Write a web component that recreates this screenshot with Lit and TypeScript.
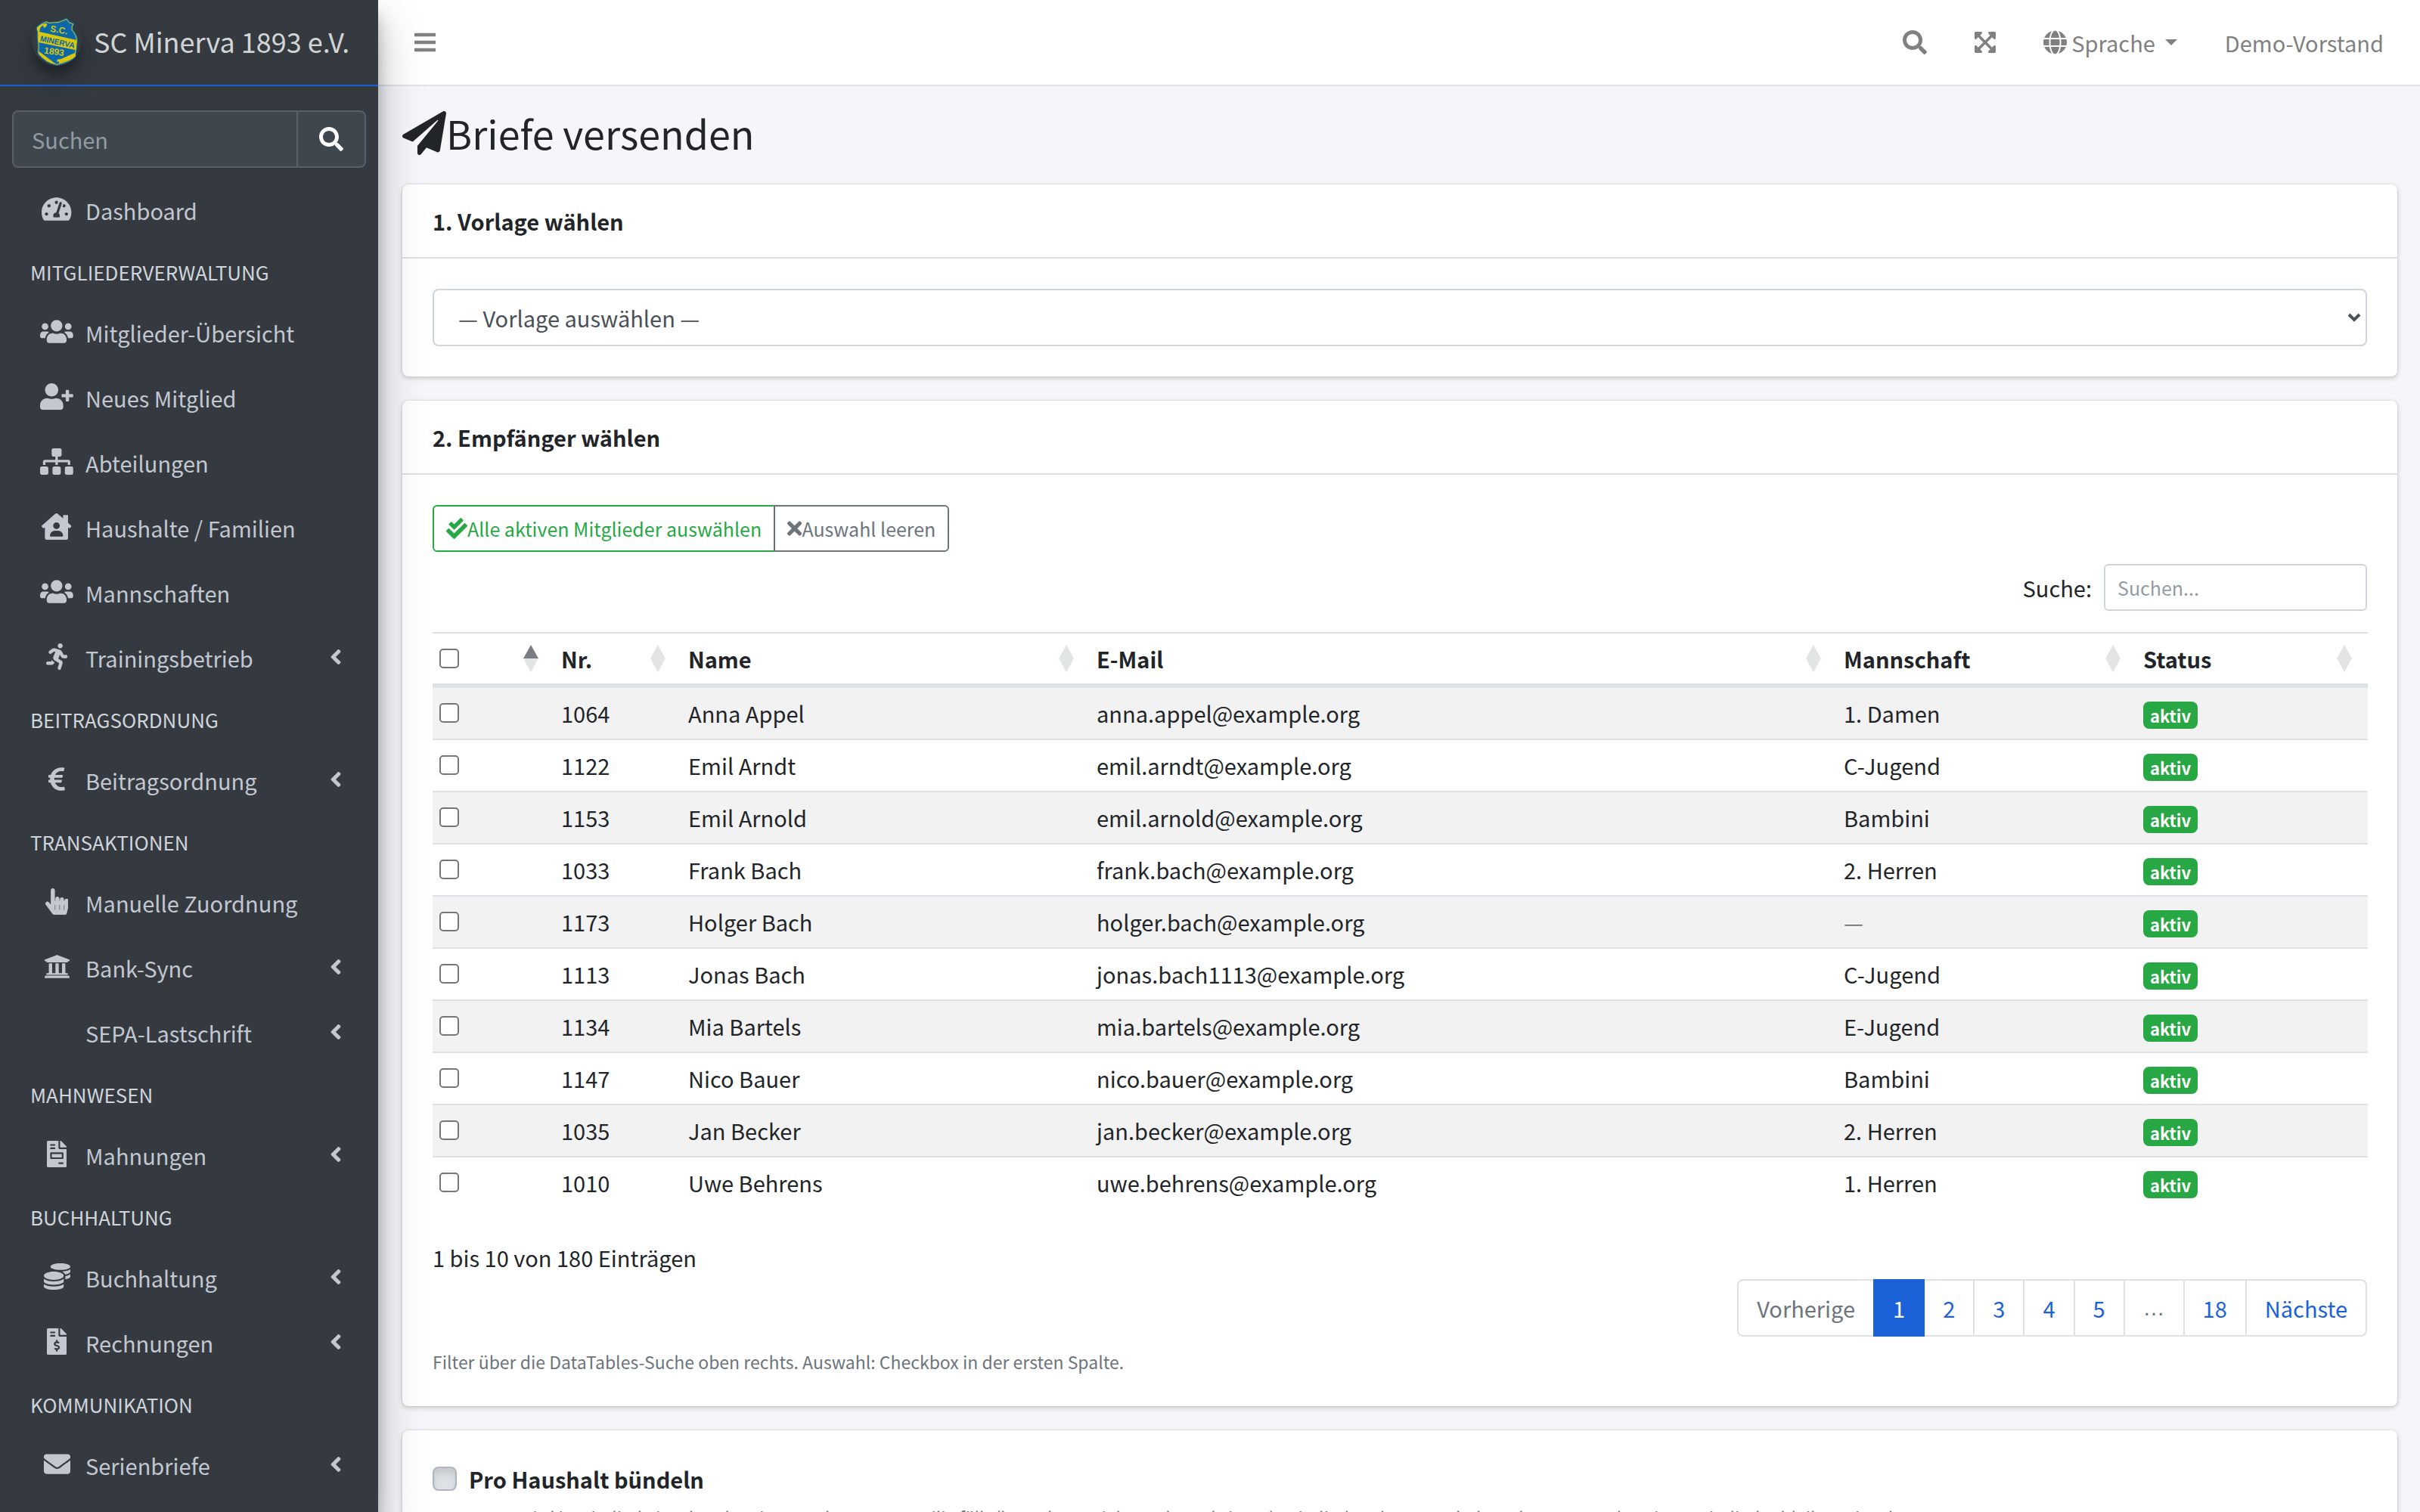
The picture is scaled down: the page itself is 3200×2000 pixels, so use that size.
import { LitElement, html, css, nothing } from 'lit';
import { customElement, property, state } from 'lit/decorators.js';
import { classMap } from 'lit/directives/class-map.js';

// name: [viewBox width, path], every icon is 512 units high
const icons: Record<string, [number, string]> = {
  gauge: [576, 'M288 32C128.94 32 0 160.94 0 320c0 52.8 14.25 102.26 39.06 144.8 5.61 9.62 16.3 15.2 27.44 15.2h443c11.14 0 21.83-5.58 27.44-15.2C561.75 422.26 576 372.8 576 320c0-159.06-128.94-288-288-288zm0 64c14.71 0 26.58 10.13 30.32 23.65-1.11 2.26-2.64 4.23-3.45 6.67l-9.22 27.67c-5.13 3.49-10.97 6.01-17.64 6.01-17.67 0-32-14.33-32-32S270.33 96 288 96zM96 384c-17.67 0-32-14.33-32-32s14.33-32 32-32 32 14.33 32 32-14.33 32-32 32zm48-160c-17.67 0-32-14.33-32-32s14.33-32 32-32 32 14.33 32 32-14.33 32-32 32zm246.77-72.41l-61.33 184C343.13 347.33 352 364.54 352 384c0 11.72-3.38 22.55-8.88 32H232.88c-5.5-9.45-8.88-20.28-8.88-32 0-33.94 26.5-61.43 59.9-63.59l61.34-184.01c4.17-12.56 17.73-19.45 30.36-15.17 12.57 4.19 19.35 17.79 15.17 30.36zm14.66 57.2l15.52-46.55c3.47-1.29 7.13-2.23 11.05-2.23 17.67 0 32 14.33 32 32s-14.33 32-32 32c-11.38-.01-20.89-6.28-26.57-15.22zM480 384c-17.67 0-32-14.33-32-32s14.33-32 32-32 32 14.33 32 32-14.33 32-32 32z'],
  users: [640, 'M96 224c35.3 0 64-28.7 64-64s-28.7-64-64-64-64 28.7-64 64 28.7 64 64 64zm448 0c35.3 0 64-28.7 64-64s-28.7-64-64-64-64 28.7-64 64 28.7 64 64 64zm32 32h-64c-17.6 0-33.5 7.1-45.1 18.6 40.3 22.1 68.9 62 75.1 109.4h66c17.7 0 32-14.3 32-32v-32c0-35.3-28.7-64-64-64zm-256 0c61.9 0 112-50.1 112-112S381.9 32 320 32 208 82.1 208 144s50.1 112 112 112zm76.8 32h-8.3c-20.8 10-43.9 16-68.5 16s-47.6-6-68.5-16h-8.3C179.6 288 128 339.6 128 403.2V432c0 26.5 21.5 48 48 48h288c26.5 0 48-21.5 48-48v-28.8c0-63.6-51.6-115.2-115.2-115.2zm-223.7-13.4C161.5 263.1 145.6 256 128 256H64c-35.3 0-64 28.7-64 64v32c0 17.7 14.3 32 32 32h65.9c6.3-47.4 34.9-87.3 75.2-109.4z'],
  userPlus: [640, 'M624 208h-64v-64c0-8.8-7.2-16-16-16h-32c-8.8 0-16 7.2-16 16v64h-64c-8.8 0-16 7.2-16 16v32c0 8.8 7.2 16 16 16h64v64c0 8.8 7.2 16 16 16h32c8.8 0 16-7.2 16-16v-64h64c8.8 0 16-7.2 16-16v-32c0-8.8-7.2-16-16-16zm-400 48c70.7 0 128-57.3 128-128S294.7 0 224 0 96 57.3 96 128s57.3 128 128 128zm89.6 32h-16.7c-22.2 10.2-46.9 16-72.9 16s-50.6-5.8-72.9-16h-16.7C60.2 288 0 348.2 0 422.4V464c0 26.5 21.5 48 48 48h352c26.5 0 48-21.5 48-48v-41.6c0-74.2-60.2-134.4-134.4-134.4z'],
  sitemap: [640, 'M128 352H32c-17.67 0-32 14.33-32 32v96c0 17.67 14.33 32 32 32h96c17.67 0 32-14.33 32-32v-96c0-17.67-14.33-32-32-32zm-24-80h192v48h48v-48h192v48h48v-57.59c0-21.17-17.23-38.41-38.41-38.41H344v-64h40c17.67 0 32-14.33 32-32V32c0-17.67-14.33-32-32-32H256c-17.67 0-32 14.33-32 32v96c0 17.67 14.33 32 32 32h40v64H94.41C73.23 224 56 241.23 56 262.41V320h48v-48zm264 80h-96c-17.67 0-32 14.33-32 32v96c0 17.67 14.33 32 32 32h96c17.67 0 32-14.33 32-32v-96c0-17.67-14.33-32-32-32zm240 0h-96c-17.67 0-32 14.33-32 32v96c0 17.67 14.33 32 32 32h96c17.67 0 32-14.33 32-32v-96c0-17.67-14.33-32-32-32z'],
  houseUser: [576, 'M570.69,236.27,512,184.44V48a16,16,0,0,0-16-16H432a16,16,0,0,0-16,16V99.67L314.78,10.3C308.5,4.61,296.53,0,288,0s-20.46,4.61-26.74,10.3l-256,226A18.27,18.27,0,0,0,0,248.2a18.64,18.64,0,0,0,4.09,10.71L25.5,282.7a21.14,21.14,0,0,0,12,5.3,21.67,21.67,0,0,0,10.69-4.11l15.9-14V480a32,32,0,0,0,32,32H480a32,32,0,0,0,32-32V269.88l15.91,14A21.94,21.94,0,0,0,538.63,288a20.89,20.89,0,0,0,11.87-5.31l21.41-23.81A21.64,21.64,0,0,0,576,248.19,21,21,0,0,0,570.69,236.27ZM288,176a64,64,0,1,1-64,64A64,64,0,0,1,288,176ZM400,448H176a16,16,0,0,1-16-16,96,96,0,0,1,96-96h64a96,96,0,0,1,96,96A16,16,0,0,1,400,448Z'],
  running: [416, 'M272 96c26.51 0 48-21.49 48-48S298.51 0 272 0s-48 21.49-48 48 21.49 48 48 48zM113.69 317.47l-14.8 34.52H32c-17.67 0-32 14.33-32 32s14.33 32 32 32h77.45c19.25 0 36.58-11.44 44.11-29.09l8.79-20.52-10.67-6.3c-17.32-10.23-30.06-25.37-37.99-42.61zM384 223.99h-44.03l-26.06-53.25c-12.5-25.55-35.45-44.23-61.78-50.94l-71.08-21.14c-28.3-6.8-57.77-.55-80.84 17.14l-39.67 30.41c-14.03 10.75-16.69 30.83-5.92 44.86s30.84 16.66 44.86 5.92l39.69-30.41c7.67-5.89 17.44-8 25.27-6.14l14.7 4.37-37.46 87.39c-12.62 29.48-1.31 64.01 26.3 80.31l84.98 50.17-27.47 87.73c-5.28 16.86 4.11 34.82 20.97 40.09 3.19 1 6.41 1.48 9.58 1.48 13.61 0 26.23-8.77 30.52-22.45l31.64-101.06c5.91-20.77-2.89-43.08-21.64-54.39l-61.24-36.14 31.31-78.28 20.27 41.43c8 16.34 24.92 26.89 43.11 26.89H384c17.67 0 32-14.33 32-32s-14.33-31.99-32-31.99z'],
  euro: [320, 'M310.706 413.765c-1.314-6.63-7.835-10.872-14.424-9.369-10.692 2.439-27.422 5.413-45.426 5.413-56.763 0-101.929-34.79-121.461-85.449h113.689a12 12 0 0 0 11.708-9.369l6.373-28.36c1.686-7.502-4.019-14.631-11.708-14.631H115.22c-1.21-14.328-1.414-28.287.137-42.36H261.7a12 12 0 0 0 11.723-9.434l6.512-29.755c1.638-7.484-4.061-14.566-11.723-14.566H130.184c20.633-44.991 62.69-75.03 117.619-75.03 14.486 0 28.564 2.25 37.851 4.145 6.216 1.268 12.347-2.498 14.002-8.623l11.991-44.368c1.822-6.741-2.465-13.616-9.326-14.917C290.217 34.912 270.71 32 249.635 32 152.451 32 74.03 92.252 45.075 176H12c-6.627 0-12 5.373-12 12v29.755c0 6.627 5.373 12 12 12h21.569c-1.009 13.607-1.181 29.287-.181 42.36H12c-6.627 0-12 5.373-12 12v28.36c0 6.627 5.373 12 12 12h30.114C67.139 414.692 145.264 480 249.635 480c26.301 0 48.562-4.544 61.101-7.788 6.167-1.595 10.027-7.708 8.788-13.957l-8.818-44.49z'],
  pointer: [448, 'M448 240v96c0 3.084-.356 6.159-1.063 9.162l-32 136C410.686 499.23 394.562 512 376 512H168a40.004 40.004 0 0 1-32.35-16.473l-127.997-176c-12.993-17.866-9.043-42.883 8.822-55.876 17.867-12.994 42.884-9.043 55.877 8.823L104 315.992V40c0-22.091 17.908-40 40-40s40 17.909 40 40v200h8v-40c0-22.091 17.908-40 40-40s40 17.909 40 40v40h8v-24c0-22.091 17.908-40 40-40s40 17.909 40 40v24h8c0-22.091 17.908-40 40-40s40 17.909 40 40zm-256 80h-8v96h8v-96zm88 0h-8v96h8v-96zm88 0h-8v96h8v-96z'],
  bank: [512, 'M496 128v16a8 8 0 0 1-8 8h-24v12c0 6.627-5.373 12-12 12H60c-6.627 0-12-5.373-12-12v-12H24a8 8 0 0 1-8-8v-16a8 8 0 0 1 4.941-7.392l232-88a7.996 7.996 0 0 1 6.118 0l232 88A8 8 0 0 1 496 128zm-24 304H40c-13.255 0-24 10.745-24 24v16a8 8 0 0 0 8 8h464a8 8 0 0 0 8-8v-16c0-13.255-10.745-24-24-24zM96 192v192H60c-6.627 0-12 5.373-12 12v20h416v-20c0-6.627-5.373-12-12-12h-36V192h-64v192h-64V192h-64v192h-64V192H96z'],
  invoice: [384, 'M288 256H96v64h192v-64zm89-151L279.1 7c-4.5-4.5-10.6-7-17-7H256v128h128v-6.1c0-6.3-2.5-12.4-7-16.9zm-153 31V0H24C10.7 0 0 10.7 0 24v464c0 13.3 10.7 24 24 24h336c13.3 0 24-10.7 24-24V160H248c-13.2 0-24-10.8-24-24zM64 72c0-4.42 3.58-8 8-8h80c4.42 0 8 3.58 8 8v16c0 4.42-3.58 8-8 8H72c-4.42 0-8-3.58-8-8V72zm0 64c0-4.42 3.58-8 8-8h80c4.42 0 8 3.58 8 8v16c0 4.42-3.58 8-8 8H72c-4.42 0-8-3.58-8-8v-16zm256 304c0 4.42-3.58 8-8 8h-80c-4.42 0-8-3.58-8-8v-16c0-4.42 3.58-8 8-8h80c4.42 0 8 3.58 8 8v16zm0-200v96c0 8.84-7.16 16-16 16H80c-8.84 0-16-7.16-16-16v-96c0-8.84 7.16-16 16-16h224c8.84 0 16 7.16 16 16z'],
  coins: [512, 'M0 405.3V448c0 35.3 86 64 192 64s192-28.7 192-64v-42.7C342.7 434.4 267.2 448 192 448S41.3 434.4 0 405.3zM320 128c106 0 192-28.7 192-64S426 0 320 0 128 28.7 128 64s86 64 192 64zM0 300.4V352c0 35.3 86 64 192 64s192-28.7 192-64v-51.6c-41.3 34-116.9 51.6-192 51.6S41.3 334.4 0 300.4zm416 11c57.3-11.1 96-31.7 96-55.4v-42.7c-23.2 16.4-57.3 27.6-96 34.5v63.6zM192 160C86 160 0 195.8 0 240s86 80 192 80 192-35.8 192-80-86-80-192-80zm219.3 56.3c60-10.8 100.7-32 100.7-56.3v-42.7c-35.5 25.1-96.5 38.6-160.7 41.8 29.5 14.3 51.2 33.5 60 57.2z'],
  invoiceDollar: [384, 'M377 105L279.1 7c-4.5-4.5-10.6-7-17-7H256v128h128v-6.1c0-6.3-2.5-12.4-7-16.9zm-153 31V0H24C10.7 0 0 10.7 0 24v464c0 13.3 10.7 24 24 24h336c13.3 0 24-10.7 24-24V160H248c-13.2 0-24-10.8-24-24zM64 72c0-4.42 3.58-8 8-8h80c4.42 0 8 3.58 8 8v16c0 4.42-3.58 8-8 8H72c-4.42 0-8-3.58-8-8V72zm0 80v-16c0-4.42 3.58-8 8-8h80c4.42 0 8 3.58 8 8v16c0 4.42-3.58 8-8 8H72c-4.42 0-8-3.58-8-8zm144 263.88V440c0 4.42-3.58 8-8 8h-16c-4.42 0-8-3.58-8-8v-24.29c-11.29-.58-22.27-4.52-31.37-11.35-3.9-2.93-4.1-8.77-.57-12.14l11.75-11.21c2.77-2.64 6.89-2.76 10.13-.73 3.87 2.42 8.26 3.72 12.82 3.72h28.11c6.5 0 11.8-5.92 11.8-13.19 0-5.95-3.61-11.19-8.77-12.73l-45-13.5c-18.59-5.58-31.58-23.42-31.58-43.39 0-24.52 19.05-44.44 42.67-45.07V232c0-4.42 3.58-8 8-8h16c4.42 0 8 3.58 8 8v24.29c11.29.58 22.27 4.51 31.37 11.35 3.9 2.93 4.1 8.77.57 12.14l-11.75 11.21c-2.77 2.64-6.89 2.76-10.13.73-3.87-2.43-8.26-3.72-12.82-3.72h-28.11c-6.5 0-11.8 5.92-11.8 13.19 0 5.95 3.61 11.19 8.77 12.73l45 13.5c18.59 5.58 31.58 23.42 31.58 43.39 0 24.53-19.05 44.44-42.67 45.07z'],
  envelope: [512, 'M502.3 190.8c3.9-3.1 9.7-.2 9.7 4.7V400c0 26.5-21.5 48-48 48H48c-26.5 0-48-21.5-48-48V195.6c0-5 5.7-7.8 9.7-4.7 22.4 17.4 52.1 39.5 154.1 113.6 21.1 15.4 56.7 47.8 92.2 47.6 35.7.3 72-32.8 92.3-47.6 102-74.1 131.6-96.3 154-113.7zM256 320c23.2.4 56.6-29.2 73.4-41.4 132.7-96.3 142.8-104.7 173.4-128.7 5.8-4.5 9.2-11.5 9.2-18.9v-19c0-26.5-21.5-48-48-48H48c-26.5 0-48 21.5-48 48v19c0 7.4 3.4 14.3 9.2 18.9 30.6 23.9 40.7 32.4 173.4 128.7 16.8 12.2 50.2 41.8 73.4 41.4z'],
  angleLeft: [256, 'M31.7 239l136-136c9.4-9.4 24.6-9.4 33.9 0l22.6 22.6c9.4 9.4 9.4 24.6 0 33.9L127.9 256l96.4 96.4c9.4 9.4 9.4 24.6 0 33.9L201.7 409c-9.4 9.4-24.6 9.4-33.9 0l-136-136c-9.5-9.4-9.5-24.6-.1-34z'],
  search: [512, 'M505 442.7L405.3 343c-4.5-4.5-10.6-7-17-7H372c27.6-35.3 44-79.7 44-128C416 93.1 322.9 0 208 0S0 93.1 0 208s93.1 208 208 208c48.3 0 92.7-16.4 128-44v16.3c0 6.4 2.5 12.5 7 17l99.7 99.7c9.4 9.4 24.6 9.4 33.9 0l28.3-28.3c9.4-9.4 9.4-24.6.1-34zM208 336c-70.7 0-128-57.2-128-128 0-70.7 57.2-128 128-128 70.7 0 128 57.2 128 128 0 70.7-57.2 128-128 128z'],
  bars: [448, 'M16 132h416c8.837 0 16-7.163 16-16V76c0-8.837-7.163-16-16-16H16C7.163 60 0 67.163 0 76v40c0 8.837 7.163 16 16 16zm0 160h416c8.837 0 16-7.163 16-16v-40c0-8.837-7.163-16-16-16H16c-8.837 0-16 7.163-16 16v40c0 8.837 7.163 16 16 16zm0 160h416c8.837 0 16-7.163 16-16v-40c0-8.837-7.163-16-16-16H16c-8.837 0-16 7.163-16 16v40c0 8.837 7.163 16 16 16z'],
  expand: [448, 'M448 344v112a23.94 23.94 0 0 1-24 24H312c-21.39 0-32.09-25.9-17-41l36.2-36.2L224 295.6 116.77 402.9 153 439c15.09 15.1 4.39 41-17 41H24a23.94 23.94 0 0 1-24-24V344c0-21.4 25.89-32.1 41-17l36.19 36.2L184.46 256 77.18 148.7 41 185c-15.1 15.1-41 4.4-41-17V56a23.94 23.94 0 0 1 24-24h112c21.39 0 32.09 25.9 17 41l-36.2 36.2L224 216.4l107.23-107.3L295 73c-15.09-15.1-4.39-41 17-41h112a23.94 23.94 0 0 1 24 24v112c0 21.4-25.89 32.1-41 17l-36.19-36.2L263.54 256l107.28 107.3L407 327.1c15.1-15.2 41-4.5 41 16.9z'],
  globe: [496, 'M336.5 160C322 70.7 287.8 8 248 8s-74 62.7-88.5 152h177zM152 256c0 22.2 1.2 43.5 3.3 64h185.3c2.1-20.5 3.3-41.8 3.3-64s-1.2-43.5-3.3-64H155.3c-2.1 20.5-3.3 41.8-3.3 64zm324.7-96c-28.6-67.9-86.5-120.4-158-141.6 24.4 33.8 41.2 84.7 50 141.6h108zM177.2 18.4C105.8 39.6 47.8 92.1 19.3 160h108c8.7-56.9 25.5-107.8 49.9-141.6zM487.4 192H372.7c2.1 21 3.3 42.5 3.3 64s-1.2 43-3.3 64h114.6c5.5-20.5 8.6-41.8 8.6-64s-3.1-43.5-8.5-64zM120 256c0-21.5 1.2-43 3.3-64H8.6C3.2 212.5 0 233.8 0 256s3.2 43.5 8.6 64h114.6c-2-21-3.2-42.5-3.2-64zm39.5 96c14.5 89.3 48.7 152 88.5 152s74-62.7 88.5-152h-177zm159.3 141.6c71.4-21.2 129.4-73.7 158-141.6h-108c-8.8 56.9-25.6 107.8-50 141.6zM19.3 352c28.6 67.9 86.5 120.4 158 141.6-24.4-33.8-41.2-84.7-50-141.6h-108z'],
  plane: [512, 'M476 3.2L12.5 270.6c-18.1 10.4-15.8 35.6 2.2 43.2L121 358.4l287.3-253.2c5.5-4.9 13.3 2.6 8.6 8.3L176 407v80.5c0 23.6 28.5 32.9 42.5 15.8L282 426l124.6 52.2c14.2 6 30.4-2.9 33-18.2l72-432C515 7.8 493.3-6.8 476 3.2z'],
  checkDouble: [512, 'M505 174.8l-39.6-39.6c-9.4-9.4-24.6-9.4-33.9 0L192 374.7 80.6 263.2c-9.4-9.4-24.6-9.4-33.9 0L7 302.9c-9.4 9.4-9.4 24.6 0 34L175 505c9.4 9.4 24.6 9.4 33.9 0l296-296.2c9.4-9.5 9.4-24.7.1-34zm-324.3 106c6.2 6.3 16.4 6.3 22.6 0l208-208.2c6.2-6.3 6.2-16.4 0-22.6L366.1 4.7c-6.2-6.3-16.4-6.3-22.6 0L192 156.2l-55.4-55.5c-6.2-6.3-16.4-6.3-22.6 0L68.7 146c-6.2 6.3-6.2 16.4 0 22.6l112 112.2z'],
  times: [352, 'M242.72 256l100.07-100.07c12.28-12.28 12.28-32.19 0-44.48l-22.24-22.24c-12.28-12.28-32.19-12.28-44.48 0L176 189.28 75.93 89.21c-12.28-12.28-32.19-12.28-44.48 0L9.21 111.45c-12.28 12.28-12.28 32.19 0 44.48L109.28 256 9.21 356.07c-12.28 12.28-12.28 32.19 0 44.48l22.24 22.24c12.28 12.28 32.2 12.28 44.48 0L176 322.72l100.07 100.07c12.28 12.28 32.2 12.28 44.48 0l22.24-22.24c12.28-12.28 12.28-32.19 0-44.48L242.72 256z'],
};

const icon = (name: string) => html`
  <svg class="icon" viewBox="0 0 ${icons[name][0]} 512" aria-hidden="true"><path d=${icons[name][1]}></path></svg>`;

interface NavEntry {
  header?: string;
  label?: string;
  icon?: string;
  tree?: boolean;
}

const navEntries: NavEntry[] = [
  { label: 'Dashboard', icon: 'gauge' },
  { header: 'MITGLIEDERVERWALTUNG' },
  { label: 'Mitglieder-Übersicht', icon: 'users' },
  { label: 'Neues Mitglied', icon: 'userPlus' },
  { label: 'Abteilungen', icon: 'sitemap' },
  { label: 'Haushalte / Familien', icon: 'houseUser' },
  { label: 'Mannschaften', icon: 'users' },
  { label: 'Trainingsbetrieb', icon: 'running', tree: true },
  { header: 'BEITRAGSORDNUNG' },
  { label: 'Beitragsordnung', icon: 'euro', tree: true },
  { header: 'TRANSAKTIONEN' },
  { label: 'Manuelle Zuordnung', icon: 'pointer' },
  { label: 'Bank-Sync', icon: 'bank', tree: true },
  { label: 'SEPA-Lastschrift', tree: true },
  { header: 'MAHNWESEN' },
  { label: 'Mahnungen', icon: 'invoice', tree: true },
  { header: 'BUCHHALTUNG' },
  { label: 'Buchhaltung', icon: 'coins', tree: true },
  { label: 'Rechnungen', icon: 'invoiceDollar', tree: true },
  { header: 'KOMMUNIKATION' },
  { label: 'Serienbriefe', icon: 'envelope', tree: true },
];

const members = [
  { nr: 1064, name: 'Anna Appel', mail: 'anna.appel@example.org', team: '1. Damen' },
  { nr: 1122, name: 'Emil Arndt', mail: 'emil.arndt@example.org', team: 'C-Jugend' },
  { nr: 1153, name: 'Emil Arnold', mail: 'emil.arnold@example.org', team: 'Bambini' },
  { nr: 1033, name: 'Frank Bach', mail: 'frank.bach@example.org', team: '2. Herren' },
  { nr: 1173, name: 'Holger Bach', mail: 'holger.bach@example.org', team: '' },
  { nr: 1113, name: 'Jonas Bach', mail: 'jonas.bach1113@example.org', team: 'C-Jugend' },
  { nr: 1134, name: 'Mia Bartels', mail: 'mia.bartels@example.org', team: 'E-Jugend' },
  { nr: 1147, name: 'Nico Bauer', mail: 'nico.bauer@example.org', team: 'Bambini' },
  { nr: 1035, name: 'Jan Becker', mail: 'jan.becker@example.org', team: '2. Herren' },
  { nr: 1010, name: 'Uwe Behrens', mail: 'uwe.behrens@example.org', team: '1. Herren' },
];

const columns = ['Nr.', 'Name', 'E-Mail', 'Mannschaft', 'Status'];
const pages = ['Vorherige', '1', '2', '3', '4', '5', '…', '18', 'Nächste'];

const shared = css`
  * {
    box-sizing: border-box;
  }
  a {
    color: inherit;
    text-decoration: none;
  }
  button, input, select {
    margin: 0;
    font: inherit;
    color: inherit;
  }
  button {
    cursor: pointer;
  }
  .icon {
    display: block;
    flex: none;
    width: auto;
    height: 32px;
    fill: currentColor;
  }
`;

@customElement('club-sidebar')
export class ClubSidebar extends LitElement {
  static styles = [shared, css`
    :host {
      display: block;
      position: relative;
      z-index: 1;
      flex: none;
      width: 500px;
      background: #343a40;
      color: #c2c7d0;
      box-shadow: 0 28px 56px rgba(0, 0, 0, 0.25), 0 20px 20px rgba(0, 0, 0, 0.22);
    }
    .brand {
      display: flex;
      align-items: center;
      gap: 16px;
      height: 114px;
      padding: 0 16px 4px 42px;
      border-bottom: 2px solid #1b62d8;
      color: rgba(255, 255, 255, 0.8);
      font-size: 36px;
      line-height: 60px;
      white-space: nowrap;
    }
    .logo {
      flex: none;
      width: 66px;
      height: 66px;
      border-radius: 50%;
      box-shadow: 0 20px 40px rgba(0, 0, 0, 0.19), 0 12px 12px rgba(0, 0, 0, 0.23);
    }
    .logo-blue {
      fill: #0a67a8;
    }
    .logo-yellow {
      fill: #d9c60d;
    }
    .logo-line {
      fill: none;
      stroke: #d9c60d;
      stroke-width: 3;
    }
    .logo-text {
      font: bold 36px 'Liberation Sans', sans-serif;
      text-anchor: middle;
    }
    .logo-name {
      font-size: 31px;
    }
    .search {
      display: flex;
      height: 76px;
      margin: 32px 16px 16px;
      border: 2px solid #56606a;
      border-radius: 8px;
      background: #3f474e;
      overflow: hidden;
    }
    .search input {
      flex: 1;
      min-width: 0;
      padding: 0 24px;
      border: 0;
      outline: 0;
      background: none;
      color: #fff;
    }
    .search input::placeholder {
      color: #939ba2;
    }
    .search button {
      display: flex;
      align-items: center;
      justify-content: center;
      width: 90px;
      padding: 0;
      border: 0;
      border-left: 2px solid #56606a;
      background: none;
      color: #fff;
    }
    .nav {
      display: flex;
      flex-direction: column;
      padding: 0 16px;
    }
    .nav-header {
      height: 76px;
      padding: 14px 24px;
      color: #d0d4db;
      font-size: 26px;
      line-height: 44px;
    }
    .nav-link {
      display: flex;
      align-items: center;
      height: 80px;
      margin-bottom: 6px;
      padding: 0 32px;
      white-space: nowrap;
    }
    .nav-icon {
      display: flex;
      justify-content: center;
      width: 54px;
      margin-right: 11px;
      padding-bottom: 4px;
    }
    .nav-icon .icon {
      height: 35px;
    }
    .nav-label {
      flex: 1;
    }
    .nav-arrow {
      padding-bottom: 3px;
    }
  `];

  render() {
    return html`
      <a class="brand" href="#">
        <svg class="logo" viewBox="126 60 198 198" aria-hidden="true">
          <path class="logo-blue" d="M142 106Q160 86 184 79Q194 88 208 83Q232 84 246 76L265 67L276 81L297 91Q288 102 290 114Q309 134 309 160L306 190Q300 215 303 224Q280 246 225 258Q178 248 149 212Q146 200 149 184L146 140Q149 122 142 106Z"></path>
          <path class="logo-line" d="M147 108Q165 90 184 84Q194 92 208 87Q234 88 248 80L264 73L273 86L290 93Q283 103 285 116Q304 136 304 160L301 190Q296 214 298 221Q276 241 225 253Q182 243 154 210Q151 200 154 184L151 140Q154 122 147 108Z"></path>
          <path class="logo-yellow" d="M147 106Q164 91 186 90Q189 104 172 108Q176 98 168 99Q156 108 158 121L150 124Z"></path>
          <path class="logo-yellow" d="M153 122L304 156L301 196L153 165Z"></path>
          <path class="logo-yellow" d="M154 200L212 244L222 252Q180 246 154 210ZM298 206L240 232Q224 230 226 242Q236 238 234 248Q276 238 298 221Z"></path>
          <text class="logo-text logo-yellow" x="232" y="128" transform="rotate(10 232 128)">S.C.</text>
          <text class="logo-text logo-name logo-blue" x="226" y="174" transform="rotate(12 226 174)">MINERVA</text>
          <text class="logo-text logo-yellow" x="213" y="214" transform="rotate(8 213 214)">1893</text>
        </svg>
        <span>SC Minerva 1893 e.V.</span>
      </a>
      <form class="search" role="search">
        <input type="search" placeholder="Suchen" aria-label="Suchen">
        <button type="button" aria-label="Suche starten">${icon('search')}</button>
      </form>
      <nav class="nav">
        ${navEntries.map(entry => entry.header
          ? html`<div class="nav-header">${entry.header}</div>`
          : html`
            <a class="nav-link" href="#">
              <span class="nav-icon">${entry.icon ? icon(entry.icon) : nothing}</span>
              <span class="nav-label">${entry.label}</span>
              ${entry.tree ? html`<span class="nav-arrow">${icon('angleLeft')}</span>` : nothing}
            </a>
          `)}
      </nav>
    `;
  }
}

@customElement('top-bar')
export class TopBar extends LitElement {
  static styles = [shared, css`
    :host {
      display: flex;
      align-items: center;
      justify-content: space-between;
      flex: none;
      height: 114px;
      padding: 0 48px;
      border-bottom: 2px solid #dee2e6;
      background: #fff;
      color: #808080;
    }
    .tools {
      display: flex;
      align-items: center;
      gap: 63px;
    }
    button {
      display: flex;
      align-items: center;
      padding: 0;
      border: 0;
      background: none;
    }
    .language {
      gap: 6px;
    }
    .caret {
      margin-left: 7px;
      border: 8px solid transparent;
      border-top-color: currentColor;
      border-bottom: 0;
    }
  `];

  render() {
    return html`
      <button type="button" aria-label="Menü">${icon('bars')}</button>
      <div class="tools">
        <button type="button" aria-label="Suchen">${icon('search')}</button>
        <button type="button" aria-label="Vollbild">${icon('expand')}</button>
        <button type="button" class="language">
          ${icon('globe')}<span>Sprache</span><span class="caret"></span>
        </button>
        <a href="#">Demo-Vorstand</a>
      </div>
    `;
  }
}

@customElement('member-table')
export class MemberTable extends LitElement {
  @property({ type: Array }) members = members;
  @state() private selected = new Set<number>();

  static styles = [shared, css`
    :host {
      display: block;
    }
    .buttons {
      display: flex;
    }
    .btn {
      display: flex;
      align-items: center;
      height: 62px;
      padding: 0 16px;
      border: 2px solid #28a745;
      border-radius: 6px 0 0 6px;
      background: none;
      color: #28a745;
      font-size: 25px;
      line-height: 42px;
    }
    .btn .icon {
      height: 28px;
    }
    .btn-clear {
      margin-left: -2px;
      border-color: #6c757d;
      border-radius: 0 6px 6px 0;
      color: #6c757d;
    }
    .filter {
      display: flex;
      align-items: center;
      justify-content: flex-end;
      gap: 16px;
      margin: 16px 0 28px;
    }
    .filter input {
      width: 348px;
      height: 62px;
      padding: 0 16px;
      border: 2px solid #ced4da;
      border-radius: 6px;
      outline: 0;
      background: #fff;
      font-size: 25px;
    }
    .filter input::placeholder {
      color: #939ba2;
    }
    table {
      width: 100%;
      table-layout: fixed;
      border-collapse: separate;
      border-spacing: 0;
    }
    .col-check { width: 161px; }
    .col-nr { width: 168px; }
    .col-name { width: 540px; }
    .col-mail { width: 988px; }
    .col-team { width: 396px; }
    .col-status { width: 306px; }
    th, td {
      padding: 9px 9px 10px;
      border-top: 2px solid #dee2e6;
      text-align: left;
      line-height: 48px;
    }
    th {
      border-bottom: 4px solid #dee2e6;
    }
    .head {
      display: flex;
      align-items: center;
      justify-content: space-between;
      height: 47px;
      padding-right: 12px;
    }
    .sort {
      display: block;
      width: 20px;
      height: 36px;
      fill: #e3e5e5;
    }
    .sort-active {
      fill: #7b7d82;
    }
    tbody tr:nth-child(odd) {
      background: #f2f2f2;
    }
    td {
      height: 69px;
    }
    .tick {
      appearance: none;
      width: 26px;
      height: 26px;
      border: 2px solid #767676;
      border-radius: 5px;
      background: #fff;
    }
    .tick:checked {
      border-color: #1b62d8;
      background: #1b62d8;
    }
    .empty {
      color: #6c757d;
    }
    .badge {
      display: inline-block;
      padding: 6px 9px;
      border-radius: 8px;
      background: #28a745;
      color: #fff;
      font-size: 22px;
      font-weight: 700;
      line-height: 24px;
    }
    .info {
      margin-top: 41px;
      line-height: 48px;
    }
    .pages {
      display: flex;
      justify-content: flex-end;
      margin: 5px 0 14px;
    }
    .page {
      display: block;
      height: 76px;
      margin-left: -2px;
      padding: 12px 24px;
      border: 2px solid #dee2e6;
      background: #fff;
      color: #1b62d8;
      line-height: 48px;
    }
    .page:first-child {
      border-radius: 8px 0 0 8px;
    }
    .page:last-child {
      border-radius: 0 8px 8px 0;
    }
    .page-disabled {
      color: #6c757d;
    }
    .page-gap {
      font-family: 'Liberation Sans', sans-serif;
    }
    .page-active {
      z-index: 1;
      border-color: #1b62d8;
      background: #1b62d8;
      color: #fff;
    }
  `];

  render() {
    return html`
      <div class="buttons">
        <button type="button" class="btn" @click=${this.selectAll}>
          ${icon('checkDouble')}<span>Alle aktiven Mitglieder auswählen</span>
        </button>
        <button type="button" class="btn btn-clear" @click=${this.clear}>
          ${icon('times')}<span>Auswahl leeren</span>
        </button>
      </div>
      <div class="filter">
        <label for="filter">Suche:</label>
        <input id="filter" type="search" placeholder="Suchen...">
      </div>
      <table>
        <colgroup>
          <col class="col-check"><col class="col-nr"><col class="col-name">
          <col class="col-mail"><col class="col-team"><col class="col-status">
        </colgroup>
        <thead>
          <tr>
            <th>
              <div class="head">
                <input class="tick" type="checkbox" aria-label="Alle auswählen" @change=${this.toggleAll}>
                ${this.renderSort(true)}
              </div>
            </th>
            ${columns.map(column => html`
              <th><div class="head"><span>${column}</span>${this.renderSort(false)}</div></th>
            `)}
          </tr>
        </thead>
        <tbody>
          ${this.members.map(member => html`
            <tr>
              <td>
                <input class="tick" type="checkbox" aria-label=${member.name}
                  .checked=${this.selected.has(member.nr)} @change=${() => this.toggle(member.nr)}>
              </td>
              <td>${member.nr}</td>
              <td>${member.name}</td>
              <td>${member.mail}</td>
              <td>${member.team || html`<span class="empty">—</span>`}</td>
              <td><span class="badge">aktiv</span></td>
            </tr>
          `)}
        </tbody>
      </table>
      <div class="info">1 bis 10 von 180 Einträgen</div>
      <nav class="pages" aria-label="Seiten">
        ${pages.map(page => html`
          <a href="#" class=${classMap({
            page: true,
            'page-active': page === '1',
            'page-disabled': page === 'Vorherige' || page === '…',
            'page-gap': page === '…',
          })}>${page}</a>
        `)}
      </nav>
    `;
  }

  renderSort(active: boolean) {
    return html`
      <svg class="sort" viewBox="0 0 20 36" aria-hidden="true">
        <path class=${active ? 'sort-active' : ''} d="M10 0L20 18H0Z"></path>
        <path d="M0 18H20L10 36Z"></path>
      </svg>
    `;
  }

  selectAll() {
    this.selected = new Set(this.members.map(member => member.nr));
  }

  clear() {
    this.selected = new Set();
  }

  toggleAll(e: Event) {
    (e.target as HTMLInputElement).checked ? this.selectAll() : this.clear();
  }

  toggle(nr: number) {
    const next = new Set(this.selected);
    next.has(nr) ? next.delete(nr) : next.add(nr);
    this.selected = next;
  }
}

@customElement('app-root')
export class AppRoot extends LitElement {
  static styles = [shared, css`
    :host {
      display: flex;
      height: 100vh;
      overflow: hidden;
      background: #f4f6f9;
      color: #212529;
      font-family: 'Noto Sans CJK KR', 'Open Sans', sans-serif;
      font-size: 29px;
      line-height: 48px;
    }
    .main {
      display: flex;
      flex-direction: column;
      flex: 1;
      min-width: 0;
    }
    .content {
      flex: 1;
      min-height: 0;
      padding: 0 30px 0 32px;
      overflow-y: auto;
      scrollbar-width: none;
    }
    h1 {
      display: flex;
      align-items: center;
      margin: 0;
      padding: 27px 0 33px;
      font-size: 52px;
      font-weight: 400;
      line-height: 70px;
    }
    h1 .icon {
      height: 58px;
    }
    .card {
      margin-bottom: 32px;
      border-radius: 8px;
      background: #fff;
      box-shadow: 0 0 2px rgba(0, 0, 0, 0.125), 0 2px 6px rgba(0, 0, 0, 0.2);
    }
    h2 {
      margin: 0;
      padding: 24px 40px;
      border-bottom: 2px solid #dfdfdf;
      font-size: 29px;
      font-weight: 700;
      line-height: 48px;
    }
    .body {
      padding: 40px;
    }
    .select {
      display: grid;
      align-items: center;
    }
    .select > * {
      grid-area: 1 / 1;
    }
    select {
      appearance: none;
      width: 100%;
      height: 76px;
      padding: 0 32px;
      border: 2px solid #ced4da;
      border-radius: 8px;
      background: #fff;
      color: #495057;
    }
    .chevron {
      justify-self: end;
      width: 18px;
      height: 12px;
      margin-right: 8px;
      fill: none;
      stroke: #495057;
      stroke-width: 4;
      pointer-events: none;
    }
    .hint {
      color: #6c757d;
      font-size: 23px;
      line-height: 38px;
    }
    .bundle {
      display: grid;
      grid-template-columns: 32px 1fr;
      column-gap: 16px;
      align-items: center;
    }
    .bundle input {
      appearance: none;
      width: 32px;
      height: 32px;
      border: 2px solid #adb5bd;
      border-radius: 8px;
      background: #dee2e6;
      box-shadow: inset 0 8px 8px rgba(0, 0, 0, 0.1);
    }
    .bundle label {
      font-weight: 700;
    }
    .bundle .hint {
      grid-column: 2;
      padding-top: 8px;
    }
  `];

  render() {
    return html`
      <club-sidebar></club-sidebar>
      <div class="main">
        <top-bar></top-bar>
        <main class="content">
          <h1>${icon('plane')}<span>Briefe versenden</span></h1>
          <section class="card">
            <h2>1. Vorlage wählen</h2>
            <div class="body select">
              <select aria-label="Vorlage">
                <option>— Vorlage auswählen —</option>
              </select>
              <svg class="chevron" viewBox="0 0 18 12" aria-hidden="true"><path d="M2 2L9 9L16 2"></path></svg>
            </div>
          </section>
          <section class="card">
            <h2>2. Empfänger wählen</h2>
            <div class="body">
              <member-table></member-table>
              <div class="hint">Filter über die DataTables-Suche oben rechts. Auswahl: Checkbox in der ersten Spalte.</div>
            </div>
          </section>
          <section class="card">
            <div class="body bundle">
              <input id="bundle" type="checkbox">
              <label for="bundle">Pro Haushalt bündeln</label>
              <div class="hint">Sonst wird je Mitglied einzeln oder eine Sendung pro Familie fällt (bzw. den Erziehungsberechtigten). Mitglieder ohne Haushalt und getrennt adressierte Mitglieder bleiben einzeln.</div>
            </div>
          </section>
        </main>
      </div>
    `;
  }
}
